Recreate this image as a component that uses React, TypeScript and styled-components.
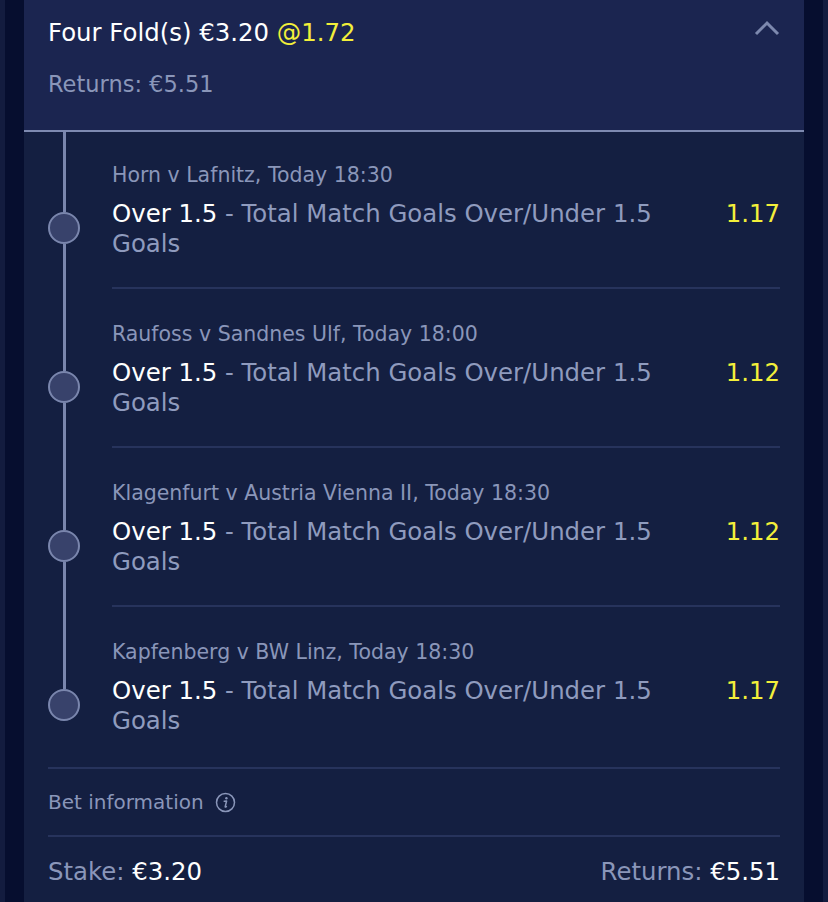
import React from 'react'
import styled, { createGlobalStyle } from 'styled-components'

const GlobalStyle = createGlobalStyle`
  html, body {
    margin: 0;
    padding: 0;
    background: #131c3f;
  }
  body {
    font-family: 'DejaVu Sans', sans-serif;
  }
`

const Page = styled.div`
  padding: 0 5px;
  min-height: 902px;
  background: #131c3f;
`
const Gutter = styled.div`
  padding: 0 19px;
  min-height: 902px;
  background: #060e2f;
`
const Card = styled.div`
  background: #141f41;
  min-height: 902px;
`
const Header = styled.div`
  display: flex;
  justify-content: space-between;
  padding: 18px 24px 33px;
  background: #1b2550;
  border-bottom: 2px solid #7e8ab1;
`
const HeaderText = styled.div`
  display: flex;
  flex-direction: column;
  gap: 23px;
`
const Title = styled.div`
  font-size: 24.4px;
  line-height: 30px;
  color: #ffffff;
`
const Odds = styled.span`
  color: #f3ef3a;
`
const Muted = styled.div`
  font-size: 22.5px;
  line-height: 26px;
  color: #8a96b9;
`
const Chevron = styled.svg`
  width: 26px;
  height: 16px;
  margin-top: 2px;
`
const Legs = styled.div`
  display: flex;
  flex-direction: column;
`
const Leg = styled.div`
  display: flex;
  gap: 8px;
`
const Rail = styled.div`
  width: 80px;
  flex: none;
  display: flex;
  flex-direction: column;
  align-items: center;
`
const Segment = styled.div<{ $height?: number; $hidden?: boolean }>`
  width: 3px;
  background: ${p => (p.$hidden ? 'transparent' : '#7a86ad')};
  ${p => (p.$height ? `height: ${p.$height}px; flex: none;` : 'flex: 1;')}
`
const Dot = styled.div`
  width: 28px;
  height: 28px;
  flex: none;
  border-radius: 50%;
  border: 2px solid #7a86ad;
  background: #38426b;
`
const LegBody = styled.div<{ $first?: boolean; $last?: boolean }>`
  flex: 1;
  margin-right: 24px;
  padding: ${p => (p.$first ? '31px' : '33px')} 0 ${p => (p.$last ? '31px' : '28px')};
  border-bottom: ${p => (p.$last ? 'none' : '2px solid #27335c')};
`
const Event = styled.div`
  font-size: 20.5px;
  line-height: 24px;
  color: #8a96b9;
  margin-bottom: 12px;
`
const SelectionRow = styled.div`
  display: flex;
  justify-content: space-between;
  align-items: flex-start;
`
const Selection = styled.div`
  width: 590px;
  font-size: 24.4px;
  line-height: 30px;
  color: #8f9bbe;
`
const Pick = styled.span`
  color: #ffffff;
`
const Price = styled.div`
  font-size: 24.4px;
  line-height: 30px;
  color: #f3ef3a;
`
const Footer = styled.div`
  margin: 0 24px;
  border-top: 2px solid #27335c;
`
const InfoRow = styled.div`
  display: flex;
  align-items: center;
  gap: 11px;
  height: 66px;
  font-size: 20px;
  color: #8a96b9;
  border-bottom: 2px solid #27335c;
`
const InfoIcon = styled.svg`
  width: 21px;
  height: 21px;
`
const StakeRow = styled.div`
  display: flex;
  justify-content: space-between;
  align-items: center;
  height: 68px;
  font-size: 24.4px;
  color: #8a96b9;
`
const Value = styled.span`
  color: #ffffff;
`

const legs = [
  { event: 'Horn v Lafnitz, Today 18:30', price: '1.17' },
  { event: 'Raufoss v Sandnes Ulf, Today 18:00', price: '1.12' },
  { event: 'Klagenfurt v Austria Vienna II, Today 18:30', price: '1.12' },
  { event: 'Kapfenberg v BW Linz, Today 18:30', price: '1.17' },
]

export default function App() {
  return (
    <>
      <GlobalStyle />
      <Page>
        <Gutter>
          <Card>
            <Header>
              <HeaderText>
                <Title>
                  Four Fold(s) €3.20 <Odds>@1.72</Odds>
                </Title>
                <Muted>Returns: €5.51</Muted>
              </HeaderText>
              <Chevron viewBox="0 0 26 16">
                <polyline points="2,14 13,3 24,14" fill="none" stroke="#7d89ae" strokeWidth="3" />
              </Chevron>
            </Header>
            <Legs>
              {legs.map((leg, i) => {
                const first = i === 0
                const last = i === legs.length - 1
                return (
                  <Leg key={leg.event}>
                    <Rail>
                      <Segment $height={first ? 80 : 82} />
                      <Dot />
                      <Segment $hidden={last} />
                    </Rail>
                    <LegBody $first={first} $last={last}>
                      <Event>{leg.event}</Event>
                      <SelectionRow>
                        <Selection>
                          <Pick>Over 1.5</Pick> - Total Match Goals Over/Under 1.5 Goals
                        </Selection>
                        <Price>{leg.price}</Price>
                      </SelectionRow>
                    </LegBody>
                  </Leg>
                )
              })}
            </Legs>
            <Footer>
              <InfoRow>
                Bet information
                <InfoIcon viewBox="0 0 21 21">
                  <circle cx="10.5" cy="10.5" r="9" fill="none" stroke="#8a96b9" strokeWidth="1.5" />
                  <circle cx="11.4" cy="6.2" r="1.2" fill="#8a96b9" />
                  <path d="M9.2 9.2 L11.6 9 L10.2 14.6 Q10 15.4 11.4 14.6" fill="none" stroke="#8a96b9" strokeWidth="1.5" strokeLinecap="round" strokeLinejoin="round" />
                </InfoIcon>
              </InfoRow>
              <StakeRow>
                <span>
                  Stake: <Value>€3.20</Value>
                </span>
                <span>
                  Returns: <Value>€5.51</Value>
                </span>
              </StakeRow>
            </Footer>
          </Card>
        </Gutter>
      </Page>
    </>
  )
}
